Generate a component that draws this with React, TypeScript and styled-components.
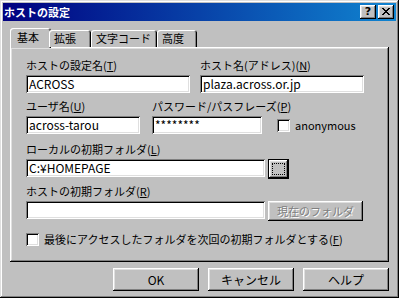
import styled, { createGlobalStyle } from 'styled-components';

const GlobalStyle = createGlobalStyle`
  html, body {
    margin: 0;
    padding: 0;
    background: #c0c0c0;
  }
  body {
    font-family: "Noto Sans CJK JP", "Noto Sans", sans-serif;
    font-size: 11px;
    color: #000;
  }
  * {
    box-sizing: border-box;
  }
`;

const raised = `
  box-shadow:
    inset -1px -1px #000,
    inset 1px 1px #fff,
    inset -2px -2px #808080,
    inset 2px 2px #dfdfdf;
`;

const sunken = `
  box-shadow:
    inset 1px 1px #808080,
    inset -1px -1px #fff,
    inset 2px 2px #000,
    inset -2px -2px #dfdfdf;
`;

const Window = styled.div`
  width: 399px;
  height: 298px;
  background: #c0c0c0;
  padding: 3px;
  display: flex;
  flex-direction: column;
  box-shadow:
    inset -1px -1px #000,
    inset 1px 1px #dfdfdf,
    inset -2px -2px #808080,
    inset 2px 2px #fff;
`;

const TitleBar = styled.div`
  height: 18px;
  background: linear-gradient(to right, #000080, #1084d0);
  display: flex;
  align-items: center;
  padding: 0 2px 0 1px;
`;

const TitleText = styled.div`
  flex: 1;
  color: #fff;
  font-weight: bold;
  font-size: 11px;
  line-height: 18px;
`;

const CaptionButton = styled.div<{ $gap?: number }>`
  width: 16px;
  height: 14px;
  background: #c0c0c0;
  ${raised}
  margin-left: ${(p) => p.$gap ?? 0}px;
  display: flex;
  align-items: center;
  justify-content: center;
  font-family: "DejaVu Sans", sans-serif;
  font-weight: bold;
  font-size: 11px;
  line-height: 14px;
  padding-bottom: 1px;
`;

const Content = styled.div`
  padding: 7px 7px 0 7px;
  display: flex;
  flex-direction: column;
`;

const TabStrip = styled.div`
  display: flex;
  align-items: flex-end;
  height: 19px;
  padding-left: 2px;
  position: relative;
  z-index: 1;
`;

const Tab = styled.div<{ $width: number; $active?: boolean }>`
  width: ${(p) => p.$width}px;
  height: ${(p) => (p.$active ? 20 : 17)}px;
  margin: ${(p) => (p.$active ? '0 -2px -1px -2px' : '0')};
  padding-left: ${(p) => (p.$active ? 7 : 5)}px;
  background: #c0c0c0;
  border-radius: 3px 3px 0 0;
  box-shadow:
    inset 1px 1px #fff,
    inset -1px 0 #000,
    inset -2px 0 #808080;
  line-height: ${(p) => (p.$active ? 19 : 17)}px;
  white-space: nowrap;
`;

const Panel = styled.div`
  height: 215px;
  background: #c0c0c0;
  box-shadow:
    inset -1px -1px #000,
    inset 1px 1px #fff,
    inset -2px -2px #808080,
    inset 2px 2px #dfdfdf;
  padding: 11px 0 0 16px;
  display: flex;
  flex-direction: column;
`;

const Row = styled.div<{ $top?: number }>`
  display: flex;
  align-items: flex-end;
  margin-top: ${(p) => p.$top ?? 0}px;
`;

const Field = styled.div<{ $width: number; $gap?: number }>`
  width: ${(p) => p.$width}px;
  display: flex;
  flex-direction: column;
  margin-left: ${(p) => p.$gap ?? 0}px;
`;

const Label = styled.div`
  height: 15px;
  line-height: 15px;
  margin-bottom: 2px;
  white-space: nowrap;
`;

const TextBox = styled.div`
  width: 100%;
  height: 18px;
  background: #fff;
  ${sunken}
  padding: 0 3px;
  line-height: 18px;
  font-size: 12px;
  white-space: nowrap;
  overflow: hidden;
`;

const Check = styled.div`
  width: 13px;
  height: 13px;
  flex: none;
  background: #fff;
  ${sunken}
`;

const CheckRow = styled.label<{ $gap?: number; $top?: number; $bottom?: number }>`
  display: flex;
  align-items: center;
  gap: 5px;
  margin-left: ${(p) => p.$gap ?? 0}px;
  margin-top: ${(p) => p.$top ?? 0}px;
  margin-bottom: ${(p) => p.$bottom ?? 0}px;
  line-height: 14px;
  white-space: nowrap;
`;

const Button = styled.div<{ $width: number; $disabled?: boolean }>`
  width: ${(p) => p.$width}px;
  height: 20px;
  margin-left: 3px;
  margin-bottom: -2px;
  background: #c0c0c0;
  ${raised}
  display: flex;
  align-items: center;
  justify-content: center;
  color: ${(p) => (p.$disabled ? '#808080' : '#000')};
  text-shadow: ${(p) => (p.$disabled ? '1px 1px #fff' : 'none')};
  white-space: nowrap;
`;

const DefaultFrame = styled.div`
  width: 21px;
  height: 20px;
  margin-left: 3px;
  margin-bottom: -2px;
  border: 1px solid #000;
  background: #c0c0c0;
  ${raised}
  display: flex;
  align-items: center;
  justify-content: center;
`;

const FocusRect = styled.div`
  width: 13px;
  height: 12px;
  border: 1px dotted #000;
`;

const Footer = styled.div`
  display: flex;
  justify-content: flex-end;
  gap: 9px;
  margin-top: 6px;
`;

const DialogButton = styled.div`
  width: 86px;
  height: 23px;
  background: #c0c0c0;
  ${raised}
  display: flex;
  align-items: center;
  justify-content: center;
  font-size: 12px;
  padding-bottom: 1px;
`;

const App = () => {
  return (
    <>
      <GlobalStyle />
      <Window>
        <TitleBar>
          <TitleText>ホストの設定</TitleText>
          <CaptionButton>?</CaptionButton>
          <CaptionButton $gap={2}>
            <svg width="8" height="7" viewBox="0 0 8 7">
              <path d="M0 0h2v1h-2zM6 0h2v1h-2zM1 1h2v1h-2zM5 1h2v1h-2zM2 2h4v1h-4zM3 3h2v1h-2zM2 4h4v1h-4zM1 5h2v1h-2zM5 5h2v1h-2zM0 6h2v1h-2zM6 6h2v1h-2z" fill="#000" />
            </svg>
          </CaptionButton>
        </TitleBar>

        <Content>
          <TabStrip>
            <Tab $width={41} $active>基本</Tab>
            <Tab $width={42}>拡張</Tab>
            <Tab $width={66}>文字コード</Tab>
            <Tab $width={40}>高度</Tab>
          </TabStrip>

          <Panel>
            <Row>
              <Field $width={164}>
                <Label>ホストの設定名(<u>T</u>)</Label>
                <TextBox>ACROSS</TextBox>
              </Field>
              <Field $width={164} $gap={10}>
                <Label>ホスト名(アドレス)(<u>N</u>)</Label>
                <TextBox>plaza.across.or.jp</TextBox>
              </Field>
            </Row>

            <Row $top={6}>
              <Field $width={114}>
                <Label>ユーザ名(<u>U</u>)</Label>
                <TextBox>across-tarou</TextBox>
              </Field>
              <Field $width={110} $gap={12}>
                <Label>パスワード/パスフレーズ(<u>P</u>)</Label>
                <TextBox>********</TextBox>
              </Field>
              <CheckRow $gap={15} $bottom={2}>
                <Check />
                <span>anonymous</span>
              </CheckRow>
            </Row>

            <Row $top={8}>
              <Field $width={239}>
                <Label>ローカルの初期フォルダ(<u>L</u>)</Label>
                <TextBox>C:¥HOMEPAGE</TextBox>
              </Field>
              <DefaultFrame>
                <FocusRect />
              </DefaultFrame>
            </Row>

            <Row $top={7}>
              <Field $width={239}>
                <Label>ホストの初期フォルダ(<u>R</u>)</Label>
                <TextBox />
              </Field>
              <Button $width={95} $disabled>現在のフォルダ</Button>
            </Row>

            <CheckRow $top={13}>
              <Check />
              <span>最後にアクセスしたフォルダを次回の初期フォルダとする(<u>F</u>)</span>
            </CheckRow>
          </Panel>

          <Footer>
            <DialogButton>OK</DialogButton>
            <DialogButton>キャンセル</DialogButton>
            <DialogButton>ヘルプ</DialogButton>
          </Footer>
        </Content>
      </Window>
    </>
  );
};

export default App;
